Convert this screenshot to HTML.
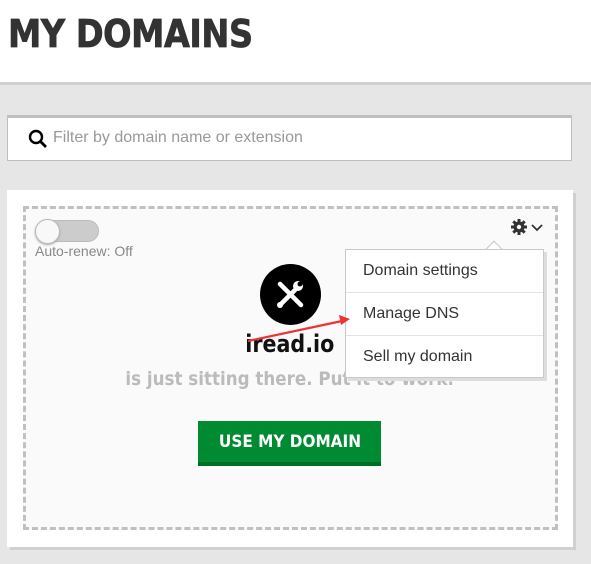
<!DOCTYPE html>
<html><head><style>
*{margin:0;padding:0;box-sizing:border-box}
body{width:591px;height:564px;overflow:hidden;background:#e6e6e6;font-family:"Liberation Sans",sans-serif;position:relative}
.hdr{position:absolute;left:0;top:0;width:591px;height:85px;background:#fff;border-bottom:3px solid #d0d0d0}
.hdr h1{position:absolute;left:8px;top:12px;font-size:38px;font-weight:900;color:#333;letter-spacing:-0.5px;font-family:"DejaVu Sans",sans-serif;transform:scaleX(0.88);transform-origin:left;-webkit-text-stroke:0.8px #333}
.search{position:absolute;left:7px;top:115px;width:565px;height:46px;background:#fff;border:1px solid #bfbfbf;border-top:3px solid #bfbfbf}
.search span{position:absolute;left:45px;top:11px;font-size:16px;color:#999}
.card{position:absolute;left:7px;top:190px;width:566px;height:357px;background:#fff;box-shadow:3px 3px 0 #d0d0d0}
.dash{position:absolute;left:23px;top:206px;width:535px;height:324px;background:#fafafa;border:3px dashed #c0c0c0}
.tog{position:absolute;left:35px;top:220px;width:64px;height:22px;border-radius:11px;background:#ccc;border:1px solid #bbb}
.knob{position:absolute;left:35px;top:219px;width:25px;height:25px;border-radius:50%;background:#f8f8f8;border:1px solid #bbb;box-shadow:0 1px 2px #aaa}
.ar{position:absolute;left:35px;top:243px;font-size:14px;color:#888}
.circ{position:absolute;left:260px;top:264px;width:61px;height:61px;border-radius:50%;background:#000}
.c{position:absolute;left:0;width:580px;text-align:center}
.c span{display:inline-block;font-family:"DejaVu Sans",sans-serif;font-weight:bold}
.dom{top:330px}.dom span{font-size:24px;color:#111;transform:scaleX(0.86)}
.sub{top:368px}.sub span{font-size:19px;color:#bbb;transform:scaleX(0.88)}
.btn{position:absolute;left:198px;top:421px;width:183px;height:45px;background:#008a32;border-bottom:4px solid #006e27;color:#fff;text-align:center;line-height:43px}
.btn span{display:inline-block;font-weight:bold;font-size:17px;font-family:"DejaVu Sans",sans-serif;transform:scaleX(0.9)}
.menu{position:absolute;left:345px;top:249px;width:199px;height:129px;background:#fff;border:1px solid #c8c8c8;box-shadow:3px 3px 0 #ddd}
.menu div{height:43px;line-height:41px;padding-left:17px;font-size:16px;color:#333;border-bottom:1px solid #e3e3e3}
.menu div:last-child{border:none}
.notch{position:absolute;left:488px;top:243px;width:12px;height:12px;background:#fff;border-left:1px solid #c8c8c8;border-top:1px solid #c8c8c8;transform:rotate(45deg)}
</style></head><body>
<div class="hdr"><h1>MY DOMAINS</h1></div>
<div class="search"><svg style="position:absolute;left:20px;top:11px" width="20" height="20" viewBox="0 0 20 20"><circle cx="8" cy="8" r="6" fill="none" stroke="#000" stroke-width="2.4"/><line x1="12.5" y1="12.5" x2="18" y2="18" stroke="#000" stroke-width="2.8"/></svg><span>Filter by domain name or extension</span></div>
<div class="card"></div>
<div class="dash"></div>
<div class="tog"></div><div class="knob"></div>
<div class="ar">Auto-renew: Off</div>
<svg style="position:absolute;left:510px;top:218px" width="36" height="18" viewBox="0 0 36 18"><g transform="translate(9,9)" fill="#333"><circle r="5.5"/><g stroke="#333" stroke-width="3"><line x1="0" y1="-8" x2="0" y2="8"/><line x1="-8" y1="0" x2="8" y2="0"/><line x1="-5.7" y1="-5.7" x2="5.7" y2="5.7"/><line x1="-5.7" y1="5.7" x2="5.7" y2="-5.7"/></g><circle r="2.2" fill="#fafafa"/></g><polyline points="22,7 27,12 32,7" fill="none" stroke="#333" stroke-width="1.8"/></svg>
<div class="circ"><svg width="61" height="61" viewBox="0 0 61 61"><g stroke="#fff" stroke-width="4.5" stroke-linecap="round"><line x1="20" y1="20" x2="41" y2="41"/><line x1="21" y1="40" x2="35" y2="26"/></g><circle cx="38" cy="22" r="5" fill="#fff"/><circle cx="40" cy="20" r="2.5" fill="#000"/><circle cx="20" cy="41" r="3" fill="#fff"/></svg></div>
<div class="c dom"><span>iread.io</span></div>
<div class="c sub"><span>is just sitting there. Put it to work.</span></div>
<div class="btn"><span>USE MY DOMAIN</span></div>
<div class="notch"></div>
<div class="menu"><div>Domain settings</div><div>Manage DNS</div><div>Sell my domain</div></div>
<svg style="position:absolute;left:0;top:0" width="591" height="564"><line x1="248" y1="341" x2="342" y2="321" stroke="#e33" stroke-width="2.2"/><polygon points="350,319 339,315 341,325" fill="#e33"/></svg>
</body></html>
